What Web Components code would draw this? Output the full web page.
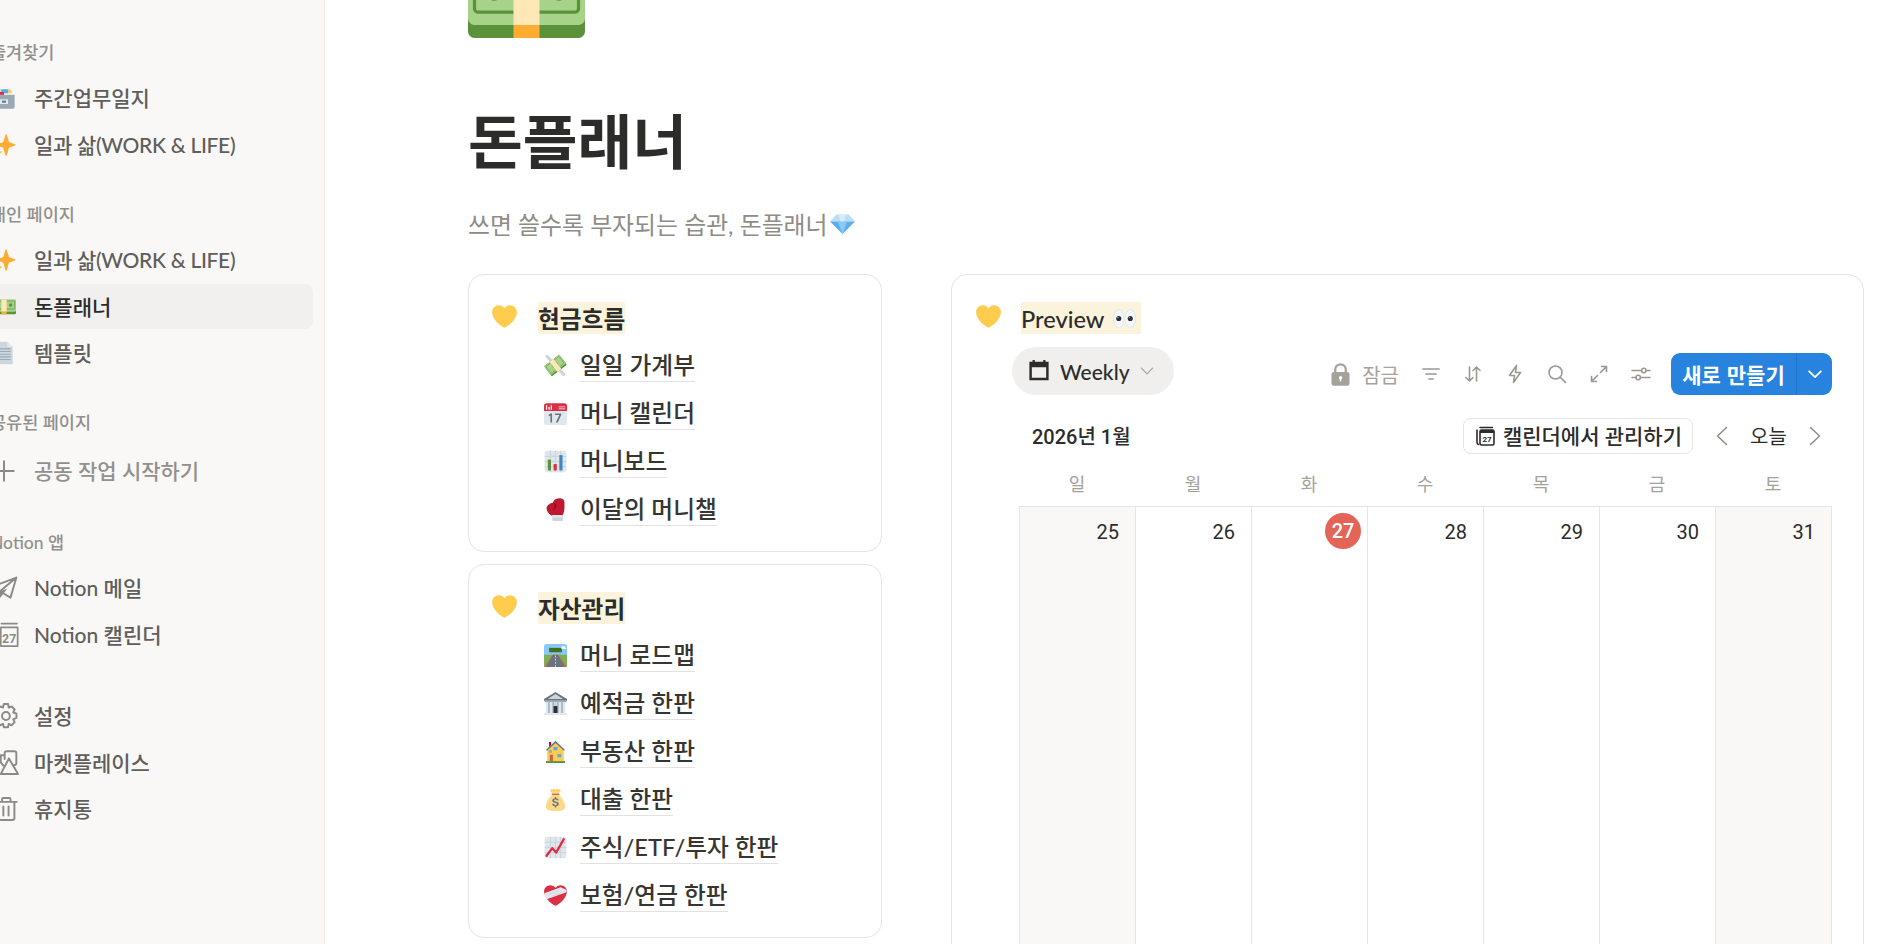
<!DOCTYPE html>
<html lang="ko">
<head>
<meta charset="utf-8">
<title>돈플래너</title>
<style>
  html, body { margin: 0; height: 100%; overflow: hidden; background: #fff; }
  body {
    display: flex;
    font-family: "Lato", "Noto Sans CJK KR", sans-serif;
    color: #2c2c2b;
  }
</style>
</head>
<body>
<side-bar>
  <side-section label="즐겨찾기">
    <side-item icon="box">주간업무일지</side-item>
    <side-item icon="sparkles" style="letter-spacing:-.32px">일과 삶(WORK &amp; LIFE)</side-item>
  </side-section>
  <side-section label="개인 페이지" style="--gap:22px">
    <side-item icon="sparkles" style="letter-spacing:-.32px">일과 삶(WORK &amp; LIFE)</side-item>
    <side-item icon="banknote" active>돈플래너</side-item>
    <side-item icon="page">템플릿</side-item>
  </side-section>
  <side-section label="공유된 페이지" style="--gap:21px">
    <side-item icon="plus" muted style="margin-top:2.8px">공동 작업 시작하기</side-item>
  </side-section>
  <side-section label="Notion 앱" style="--gap:24px">
    <side-item icon="plane">Notion 메일</side-item>
    <side-item icon="cal27">Notion 캘린더</side-item>
  </side-section>
  <side-section style="--gap:35px">
    <side-item icon="gear">설정</side-item>
    <side-item icon="market">마켓플레이스</side-item>
    <side-item icon="trash">휴지통</side-item>
  </side-section>
</side-bar>

<main-page>
  <link-card slot="left" heading="현금흐름">
    <link-row icon="moneywings">일일 가계부</link-row>
    <link-row icon="calendar">머니 캘린더</link-row>
    <link-row icon="barchart">머니보드</link-row>
    <link-row icon="glove">이달의 머니챌</link-row>
  </link-card>
  <link-card slot="left" heading="자산관리">
    <link-row icon="road">머니 로드맵</link-row>
    <link-row icon="bank">예적금 한판</link-row>
    <link-row icon="house">부동산 한판</link-row>
    <link-row icon="bag">대출 한판</link-row>
    <link-row icon="chart">주식/ETF/투자 한판</link-row>
    <link-row icon="mend">보험/연금 한판</link-row>
  </link-card>
  <calendar-card slot="right"></calendar-card>
</main-page>

<script>
const HEART = 'M35.885 11.833c0-5.45-4.418-9.868-9.867-9.868-3.308 0-6.227 1.633-8.018 4.129-1.791-2.496-4.71-4.129-8.017-4.129-5.45 0-9.868 4.417-9.868 9.868 0 .772.098 1.52.266 2.241C1.751 22.587 11.216 31.568 18 34.034c6.783-2.466 16.249-11.447 17.617-19.959.17-.721.268-1.469.268-2.242z';

// twemoji style pictures, viewBox 0 0 36 36
const EMOJI = {
  heart: `<path fill="#ffcc4d" d="${HEART}"/>`,
  sparkles: `<path fill="#ffac33" d="M34.347 16.893l-8.899-3.294-3.323-10.891c-.128-.42-.517-.708-.956-.708-.439 0-.828.288-.956.708l-3.322 10.891-8.9 3.294c-.393.146-.653.519-.653.938 0 .418.26.793.653.938l8.895 3.293 3.324 11.223c.126.424.516.715.959.715.442 0 .833-.291.959-.716l3.324-11.223 8.896-3.293c.391-.144.652-.518.652-.937 0-.418-.261-.792-.653-.938z"/><path fill="#ffcc4d" d="M14.347 27.894l-2.314-.856-.9-3.3c-.118-.436-.513-.738-.964-.738-.451 0-.846.302-.965.737l-.9 3.3-2.313.856c-.393.145-.653.52-.653.938 0 .418.26.793.653.938l2.301.853.907 3.622c.112.444.511.756.97.756.459 0 .858-.312.97-.757l.907-3.622 2.301-.853c.393-.144.653-.519.653-.937 0-.418-.26-.793-.653-.937zM10.009 6.231l-2.364-.875-.876-2.365c-.145-.393-.519-.653-.938-.653-.418 0-.792.26-.938.653l-.875 2.365-2.365.875c-.393.146-.653.52-.653.938 0 .418.26.793.653.938l2.365.875.875 2.365c.146.393.52.653.938.653.418 0 .792-.26.938-.653l.875-2.365 2.365-.875c.393-.146.653-.52.653-.938 0-.418-.26-.792-.653-.938z"/>`,
  banknote: `<rect y="7" width="36" height="22" rx="2" fill="#5c913b"/><path fill="#a6d388" d="M0 9a2 2 0 012-2h32a2 2 0 012 2v14a2 2 0 01-2 2H2a2 2 0 01-2-2z"/><rect x="2" y="9" width="32" height="12" rx="1" fill="none" stroke="#5c913b"/><circle cx="8" cy="15" r="2.5" fill="#5c913b"/><circle cx="28" cy="15" r="2.5" fill="#5c913b"/><rect x="14" y="7" width="8" height="18" fill="#ffe8b6"/><rect x="14" y="25" width="8" height="4" fill="#ffac33"/>`,
  box: `<path fill="#ccd6dd" d="M5 10l3-5h20l3 5z"/><path fill="#55acee" d="M14 5h10v6H14z"/><path fill="#dd2e44" d="M5 9h13v6H5z"/><path fill="#ffcc4d" d="M24 6h4v5h-4z"/><path fill="#99aab5" d="M2 13h32v18a3 3 0 01-3 3H5a3 3 0 01-3-3z"/><path fill="#e1e8ed" d="M12 20h12v7H12z"/><path fill="#66757f" d="M15 22h6v3h-6z"/>`,
  page: `<path fill="#ccd6dd" d="M6 1h17l8 8v26H6z"/><path fill="#e1e8ed" d="M23 1l8 8h-8z"/><path fill="#99aab5" d="M9 11h19v1.600H9zM9 15h19v1.600H9zM9 19h19v1.600H9zM9 23h19v1.600H9zM9 27h19v1.600H9z"/>`,
  moneywings: `<path d="M3 2.500c2-1.500 4-.5 5 1l5 6-3.500 3-6-6.500c-1.200-1.300-1.500-2.700-.5-3.500zM33 33.500c-2 1.500-4 .5-5-1l-5-6 3.500-3 6 6.500c1.200 1.300 1.500 2.700.5 3.500z" fill="#ccd6dd"/><g transform="rotate(-38 18 18)"><rect x="3" y="8" width="30" height="20" rx="1.500" fill="#5c913b"/><rect x="3" y="8" width="30" height="17.500" rx="1.500" fill="#a6d388"/><rect x="5" y="10" width="26" height="13.500" fill="none" stroke="#5c913b" stroke-width=".8"/><circle cx="18" cy="17" r="5" fill="#77b255"/><rect x="14" y="8" width="8" height="20" fill="#ffe8b6"/></g>`,
  calendar: `<path fill="#e1e8ed" d="M36 32a4 4 0 01-4 4H4a4 4 0 01-4-4V9a4 4 0 014-4h28a4 4 0 014 4z"/><path fill="#dd2e44" d="M36 14H0V6a4 4 0 014-4h28a4 4 0 014 4z"/><path fill="#fff" d="M3 5h2v7H3zM7 8h2v4H7zM10.500 5h2v7h-2zM23 7h10v1.400H23zM23 10h10v1.400H23z"/><path fill="#66757f" d="M10 18h2.600v14H10L10 21l-2.500 1.400v-2.400zM17 18h10v2.400L21.500 32h-3l5.500-11.500h-7z"/>`,
  barchart: `<path fill="#e1e8ed" d="M31 1H5a4 4 0 00-4 4v26a4 4 0 004 4h26a4 4 0 004-4V5a4 4 0 00-4-4z"/><path fill="#ccd6dd" d="M9 1h2v34H9zM17 1h2v34h-2zM25 1h2v34h-2zM1 9h34v2H1zM1 17h34v2H1zM1 25h34v2H1z"/><path fill="#5c913b" d="M6 15h5v17H6z"/><path fill="#dd2e44" d="M15 22h5v10h-5z"/><path fill="#3b88c3" d="M24 8h5v24h-5z"/>`,
  glove: `<path fill="#be1931" d="M28 1c-5-1.200-11 .2-13 3.500-.8 1.300-1 3-1 3-4 .5-10 4-10 8.500 0 3 2 6.500 4 8.500 2 2 4 3 5 3h16c1-2 3-6 3-13S33 2 28 1z"/><path fill="#a0041e" d="M14 7.500c2.500 1 3.500 5 1.500 9-1 2-3.500 2.500-3.500 2.500 3.500 0 6-2 7-5.500 1-4-1.500-6.500-5-6z"/><path fill="#ccd6dd" d="M13 27h17v7a2 2 0 01-2 2H15a2 2 0 01-2-2z"/><path fill="#e1e8ed" d="M13 27h17v3.500H13z"/>`,
  road: `<rect width="36" height="36" rx="4" fill="#88c9f9"/><path fill="#77b255" d="M0 17h36v15a4 4 0 01-4 4H4a4 4 0 01-4-4z"/><path fill="#c1694f" d="M13.500 17h9L36 36H0z"/><path fill="#66757f" d="M14.500 17h7L32 36H4z"/><path stroke="#fff" stroke-width="1" stroke-dasharray="3 2" d="M18 18v18"/><path fill="#3e721d" d="M8 6h20v7H8z"/><path fill="#99aab5" d="M11 13h1.500v4H11zM24 13h1.500v4H24z"/><path fill="#fff" d="M27 6a3 3 0 013-3 3 3 0 013 2 2.300 2.300 0 012 2.500H27z"/>`,
  bank: `<path fill="#66757f" d="M18 0L0 11v2.500h36V11z"/><path fill="#ccd6dd" d="M18 3L6 11h24z"/><path fill="#99aab5" d="M1 13h34v3H1z"/><path fill="#ccd6dd" d="M3 16h30v17H3z"/><path fill="#e1e8ed" d="M3 16h4v17H3zM9.500 16h4v17h-4zM22.500 16h4v17h-4zM29 16h4v17h-4z"/><path fill="#8899a6" d="M7 16h1.500v17H7zM13.500 16h1.500v17h-1.500zM21 16h1.500v17H21zM27.500 16H29v17h-1.500z"/><path fill="#292f33" d="M15 22h6v11h-6z"/><path fill="#e1e8ed" d="M0 33h36v3H0z"/>`,
  house: `<path fill="#ffcc4d" d="M5 16L18 4l13 12v17H5z"/><path fill="#66757f" d="M18 1L3 15.500l1.800 1.500L18 4.500 31.200 17 33 15.500z"/><path fill="#c1694f" d="M9 23h5v10H9z"/><path fill="#55acee" d="M21 22h6v5h-6zM15 11h6v5h-6zM8 16h4v4H8z"/><path fill="#a0041e" d="M8 3h3v5l-3 3z"/><path fill="#5c913b" d="M3 33h30v3H3z"/>`,
  bag: `<path fill="#fdd888" d="M33 29c0-8-7-16-10-18l2-5H11l2 5C10 13 3 21 3 29c0 5 4 7 15 7s15-2 15-7z"/><path fill="#ffcc4d" d="M11 1l2 2 2-2 3 2 3-2 2 2 2-2 1 5H10z"/><path fill="#bf6952" d="M12 9h12v2H12z"/><path fill="#67757f" d="M17 14h2v2c2 .2 3.500 1.200 4 3l-2.200.7c-.3-1-1.300-1.700-2.800-1.700-1.400 0-2.300.6-2.300 1.500 0 2.500 7.500 1 7.500 5.500 0 2-1.700 3.200-4.200 3.500v2h-2v-2c-2.300-.3-4-1.500-4.500-3.500l2.300-.6c.4 1.300 1.600 2.100 3.200 2.100 1.500 0 2.500-.6 2.500-1.500 0-2.500-7.500-1-7.500-5.500 0-1.800 1.600-3 4-3.300z"/>`,
  chart: `<path fill="#e1e8ed" d="M31 1H5a4 4 0 00-4 4v26a4 4 0 004 4h26a4 4 0 004-4V5a4 4 0 00-4-4z"/><path fill="#ccd6dd" d="M9 1h2v34H9zM17 1h2v34h-2zM25 1h2v34h-2zM1 9h34v2H1zM1 17h34v2H1zM1 25h34v2H1z"/><path fill="none" stroke="#dd2e44" stroke-width="3.600" stroke-linecap="round" stroke-linejoin="round" d="M4 31l9-12 6 7L31 5"/>`,
  mend: `<path fill="#dd2e44" d="${HEART}"/><path fill="#e1e8ed" d="M.5 14.500L26 5l9 4 .5 4L4 24c-2-3-3.200-6-3.500-9.500z"/><path fill="#ccd6dd" d="M8 15l14-5 1 1.200-14 5zM13 18l14-5 .8 1.200-14 5z"/>`,
  eyes: `<ellipse cx="9" cy="18" rx="9" ry="15" fill="#e1e8ed"/><ellipse cx="27" cy="18" rx="9" ry="15" fill="#e1e8ed"/><ellipse cx="9" cy="18" rx="7.500" ry="13.500" fill="#f5f8fa"/><ellipse cx="27" cy="18" rx="7.500" ry="13.500" fill="#f5f8fa"/><circle cx="9" cy="18" r="4" fill="#292f33"/><circle cx="27" cy="18" r="4" fill="#292f33"/><circle cx="7.600" cy="16.500" r="1.200" fill="#8899a6"/><circle cx="25.600" cy="16.500" r="1.200" fill="#8899a6"/>`,
  diamond: `<path fill="#bdddf4" d="M9 5h18l9 10H0z"/><path fill="#5dadec" d="M0 15h36L18 33z"/><path fill="#88c9f9" d="M11 15h14l-7 18z"/><path fill="#e1f0fb" d="M12 5h12l-4 10h-5z" opacity=".7"/>`
};

// line icons, viewBox 0 0 20 20
const stroke = (d, w) => `<path fill="none" stroke="currentColor" stroke-width="${w || 1.500}" stroke-linecap="round" stroke-linejoin="round" d="${d}"/>`;
const ICONS = {
  plus: stroke('M10 2.500v15M2.500 10h15', 1.500),
  plane: stroke('M19.500 2L1 9l6 3.500L19.500 2l-4.500 15.500-8-5-1 5.500L2 15') + `<path fill="currentColor" d="M7 12.500l5.500-2-5.800 7.500z"/>`,
  cal27: stroke('M8 1.200h12M7.500 4.200h13v14.300h-13', 1.300) + `<path fill="none" stroke="currentColor" stroke-width="1.300" d="M7.500 4.200v14.300"/><text x="14" y="16" text-anchor="middle" font-size="9.500" font-weight="700" fill="currentColor" font-family="Roboto, sans-serif">27</text>`,
  gear: `<g transform="translate(11.500 10) scale(1.080) translate(-10 -10)">` + stroke('M8.500 1.500h3l.5 2.500 2-.8 2.200 2.200-1 2 2.300 1v3l-2.300 1 1 2-2.200 2.200-2-1-.5 2.400h-3l-.6-2.400-2 1-2.100-2.200 1-2-2.300-1v-3l2.300-1-1-2L5.900 3.200l2 .8z', 1.400) + `<circle cx="10" cy="10" r="2.800" fill="none" stroke="currentColor" stroke-width="1.400"/></g>`,
  market: stroke('M10.500 7V2.500A1.500 1.500 0 0112 1h6a1.500 1.500 0 011.500 1.500V10a1.500 1.500 0 01-1.500 1.500M13.800 6.500L7.500 18.500h13.300zM10.500 4H7.500V9.500L9.500 12'),
  trash: stroke('M3.500 4.500h16.300M8.500 4.500V2.500a1 1 0 011-1h4.500a1 1 0 011 1v2M5 4.500v12.500a1.500 1.500 0 001.500 1.500h10a1.500 1.500 0 001.500-1.500V4.500M9.500 8v7M13.500 8v7'),
  filter: stroke('M2 5h16M5 10h10M8 15h4', 1.700),
  sort: stroke('M6.500 3v14M3 13.500L6.500 17l3.500-3.500M13.500 17V3M10 6.500L13.500 3 17 6.500', 1.600),
  bolt: stroke('M11.500 1.500L4.500 11.500h5L8.500 18.500 15.500 8.500h-5z', 1.600),
  search: stroke('M13.500 13.500L18.500 18.500', 1.700) + `<circle cx="8.500" cy="8.500" r="6.500" fill="none" stroke="currentColor" stroke-width="1.600"/>`,
  expand: stroke('M11.500 8.500L17.500 2.500M12.500 2.500h5v5M8.500 11.500l-6 6M2.500 12.500v5h5', 1.600),
  sliders: stroke('M1 6.500h9.500M15 6.500h4M1 13.500h4M9.500 13.500H19') + `<circle cx="12.800" cy="6.500" r="2.200" fill="none" stroke="currentColor" stroke-width="1.500"/><circle cx="7.200" cy="13.500" r="2.200" fill="none" stroke="currentColor" stroke-width="1.500"/>`,
  lock: `<path fill="none" stroke="currentColor" stroke-width="1.800" d="M5.800 9V6a4.200 4.200 0 018.400 0v3"/><rect x="2.800" y="8" width="14.400" height="11" rx="1.800" fill="currentColor"/><circle cx="10" cy="12.500" r="1.400" fill="#fff"/><path fill="#fff" d="M9.400 12.500h1.200v3H9.400z"/>`,
  week: `<path fill="currentColor" d="M5 0h2.400v3H5zM16.600 0H19v3h-2.400z"/><path fill="currentColor" fill-rule="evenodd" d="M1.500 2h21v20h-21zM4.200 8v11.400h15.600V8z"/>`,
  chevdown: stroke('M3 6.500l7 7 7-7', 1.500),
  chevwhite: stroke('M3.500 7l6.500 6.500L16.500 7', 2),
  chevleft: stroke('M14.500 1.500L5.500 10l9 8.500', 1.500),
  chevright: stroke('M5.500 1.500l9 8.500-9 8.500', 1.500),
  stack: stroke('M5 1.500h12.500M2 4v12.500a2 2 0 001.500 2', 1.600) + `<rect x="5" y="4" width="14" height="15" rx="1.500" fill="none" stroke="currentColor" stroke-width="1.600"/><path fill="currentColor" d="M5 4h14v3H5z"/><text x="12" y="16.200" text-anchor="middle" font-size="8" font-weight="700" fill="currentColor" font-family="Roboto, sans-serif">27</text>`
};

class TwEmoji extends HTMLElement {
  connectedCallback() {
    const size = this.getAttribute('size') || 24;
    this.attachShadow({mode: 'open'}).innerHTML = `
      <style>
        :host { display: inline-flex; flex: none; width: ${size}px; height: ${size}px; }
        svg { width: 100%; height: 100%; display: block; }
      </style>
      <svg viewBox="0 0 36 36">${EMOJI[this.getAttribute('name')] || ''}</svg>`;
  }
}
class UiIcon extends HTMLElement {
  connectedCallback() {
    const size = this.getAttribute('size') || 20;
    const box = this.getAttribute('box') || '0 0 20 20';
    this.attachShadow({mode: 'open'}).innerHTML = `
      <style>
        :host { display: inline-flex; flex: none; width: ${size}px; height: ${size}px; }
        svg { width: 100%; height: 100%; display: block; overflow: visible; }
      </style>
      <svg viewBox="${box}">${ICONS[this.getAttribute('name')] || ''}</svg>`;
  }
}
customElements.define('tw-emoji', TwEmoji);
customElements.define('ui-icon', UiIcon);

class SideBar extends HTMLElement {
  constructor() {
    super();
    this.attachShadow({mode: 'open'}).innerHTML = `
      <style>
        :host {
          display: block; flex: none; box-sizing: border-box;
          width: 325px; height: 944px; overflow: hidden;
          background: #f9f8f7; border-right: 1px solid #eeedeb;
        }
        .inner { margin-left: -10px; padding: 29px 11px 0 0; }
      </style>
      <div class="inner"><slot></slot></div>`;
  }
}
class SideSection extends HTMLElement {
  connectedCallback() {
    const label = this.getAttribute('label');
    this.attachShadow({mode: 'open'}).innerHTML = `
      <style>
        :host { display: flow-root; margin-top: var(--gap, 0); }
        .label {
          height: 46.67px; line-height: 47.5px; font-size: 17.5px; font-weight: 500;
          color: #91908c; white-space: nowrap;
        }
      </style>
      ${label ? `<div class="label">${label}</div>` : ''}
      <slot></slot>`;
  }
}
class SideItem extends HTMLElement {
  connectedCallback() {
    const icon = this.getAttribute('icon');
    const graphic = EMOJI[icon]
      ? `<tw-emoji name="${icon}" size="24"></tw-emoji>`
      : `<ui-icon name="${icon}" size="26" style="color:#8c8a85;margin:0 -1px"></ui-icon>`;
    this.attachShadow({mode: 'open'}).innerHTML = `
      <style>
        :host {
          display: flex; align-items: center; gap: 18px; box-sizing: border-box;
          height: 45px; margin-bottom: 1.67px; padding-left: 2px; border-radius: 8px;
          font-size: 21px; font-weight: 500; color: #5f5e5b; white-space: nowrap;
        }
        :host([active]) { background: #f1f0ee; color: #2c2c2b; }
        :host([muted]) { color: #91908c; }
        span { margin-bottom: 2px; }
      </style>
      ${graphic}<span><slot></slot></span>`;
  }
}
customElements.define('side-bar', SideBar);
customElements.define('side-section', SideSection);
customElements.define('side-item', SideItem);

class MainPage extends HTMLElement {
  constructor() {
    super();
    this.attachShadow({mode: 'open'}).innerHTML = `
      <style>
        :host { display: block; flex: 1; min-width: 0; height: 944px; overflow: hidden; background: #fff; }
        .wrap { padding-left: 143px; }
        .cover { display: block; width: 117px; height: 38px; }
        h1 { margin: 68px 0 0; font-size: 59.5px; line-height: 70px; font-weight: 700; color: #2c2c2b; }
        .sub {
          margin-top: 32px; height: 30px; display: flex; align-items: center;
          font-size: 23.9px; color: #8f8c86;
        }
        .sub tw-emoji { margin-left: 2px; }
        .cols { display: flex; align-items: flex-start; gap: 69px; margin-top: 36px; }
        .left { width: 414px; flex: none; display: flex; flex-direction: column; gap: 12px; }
      </style>
      <div class="wrap">
        <svg class="cover" viewBox="0 17.300 36 11.700" preserveAspectRatio="none">${EMOJI.banknote}</svg>
        <h1>돈플래너</h1>
        <div class="sub">쓰면 쓸수록 부자되는 습관, 돈플래너<tw-emoji name="diamond" size="25"></tw-emoji></div>
        <div class="cols">
          <div class="left"><slot name="left"></slot></div>
          <slot name="right"></slot>
        </div>
      </div>`;
  }
}
class LinkCard extends HTMLElement {
  connectedCallback() {
    this.attachShadow({mode: 'open'}).innerHTML = `
      <style>
        :host {
          display: block; box-sizing: border-box; position: relative;
          border: 1px solid #e6e5e3; border-radius: 16px; padding: 27px 0 15px 69px;
        }
        .heart { position: absolute; left: 23px; top: 29px; }
        h3 {
          margin: 0 0 10px; display: inline-block; height: 32px; line-height: 35px;
          font-size: 23.7px; font-weight: 700; background: #fbf3db; color: #2c2c2b;
        }
      </style>
      <tw-emoji class="heart" name="heart" size="25"></tw-emoji>
      <div><h3>${this.getAttribute('heading')}</h3></div>
      <div><slot></slot></div>`;
  }
}
class LinkRow extends HTMLElement {
  connectedCallback() {
    this.attachShadow({mode: 'open'}).innerHTML = `
      <style>
        :host {
          display: flex; align-items: flex-start; gap: 13px; box-sizing: border-box;
          height: 48px; padding: 7px 0 0 6px;
        }
        tw-emoji { margin-top: 3px; }
        span {
          height: 30px; line-height: 29px; font-size: 23.7px; font-weight: 500; color: #37352f;
          border-bottom: 1px solid #e3e2e0; white-space: nowrap;
        }
      </style>
      <tw-emoji name="${this.getAttribute('icon')}" size="23"></tw-emoji>
      <span><slot></slot></span>`;
  }
}
customElements.define('main-page', MainPage);
customElements.define('link-card', LinkCard);
customElements.define('link-row', LinkRow);

class CalendarCard extends HTMLElement {
  connectedCallback() {
    const days = ['일', '월', '화', '수', '목', '금', '토'];
    const nums = [25, 26, 27, 28, 29, 30, 31];
    this.attachShadow({mode: 'open'}).innerHTML = `
      <style>
        :host {
          display: block; box-sizing: border-box; position: relative;
          width: 913px; height: 800px; flex: none;
          border: 1px solid #e6e5e3; border-radius: 16px; padding: 27px 31px 0 67px;
          font-family: "Roboto", "Noto Sans CJK KR", sans-serif;
        }
        .heart { position: absolute; left: 24px; top: 29px; }
        .title {
          display: inline-flex; align-items: center; box-sizing: border-box; width: 120px;
          height: 32px; margin-left: 2px; padding: 2px 0 0 0;
          background: #fbf3db; font-family: "Lato", sans-serif; font-size: 23.6px; font-weight: 500;
        }
        .title tw-emoji { margin: -2px 0 0 9px; }
        .bar { display: flex; align-items: flex-end; justify-content: space-between; margin: 13px 0 0 -7px; }
        .pill {
          display: flex; align-items: center; box-sizing: border-box; width: 162px; height: 48px;
          padding-left: 16px; border-radius: 24px; background: #f0efed;
          font-family: "Lato", sans-serif; font-size: 21px; font-weight: 500;
        }
        .pill .t { margin-left: 10px; }
        .pill .c { margin-left: 9px; color: #a5a29c; }
        .tools { display: flex; align-items: center; height: 42px; color: #9b9892; }
        .tools > ui-icon { margin-left: 22px; }
        .lock { display: flex; align-items: center; font-size: 20px; color: #a5a29c; }
        .lock ui-icon { margin: 0 9px 0 -3px; }
        .new {
          display: flex; align-items: center; box-sizing: border-box; width: 161px; height: 42px; margin-left: 20px;
          background: #2783de; color: #fff; border-radius: 9px; font-size: 21px; font-weight: 700;
          font-family: "Noto Sans CJK KR", sans-serif;
        }
        .new .a { flex: 1; height: 100%; display: flex; align-items: center; justify-content: center; }
        .new .b {
          width: 35px; height: 100%; display: flex; align-items: center; justify-content: center;
          border-left: 1px solid #1f74c9;
        }
        .nav { display: flex; align-items: center; height: 36px; margin-top: 23px; padding-left: 13px; font-size: 20px; }
        .month { font-weight: 500; flex: 1; margin-bottom: 2px; }
        .manage {
          display: flex; align-items: center; gap: 8px; box-sizing: border-box; height: 36px; padding: 0 10px 2px 11px;
          border: 1px solid #e6e5e3; border-radius: 8px; font-size: 21px; font-weight: 500; color: #2c2c2b;
        }
        .manage ui-icon { margin-top: 2px; }
        .today { width: 37px; margin: 0 18px 2px; font-size: 20px; white-space: nowrap; }
        .arrow { color: #8f8c86; }
        .head { display: grid; grid-template-columns: repeat(7, 1fr); height: 52px; padding-top: 5px; box-sizing: border-box; width: 812px; }
        .head div { display: flex; align-items: center; justify-content: center; font-size: 18px; color: #a5a29c; }
        .grid {
          display: grid; grid-template-columns: repeat(7, 1fr); width: 813px; box-sizing: border-box;
          border-top: 1px solid #e6e5e3; border-right: 1px solid #e6e5e3; height: 600px;
        }
        .cell { border-left: 1px solid #e6e5e3; display: flex; justify-content: flex-end; align-items: flex-start; padding: 6px 6px 0 0; }
        .cell.off { background: #f9f8f7; }
        .num { height: 36px; line-height: 39px; min-width: 36px; padding: 0 10px; box-sizing: border-box; font-size: 20px; text-align: right; color: #2c2c2b; }
        .cell.now .num { padding: 0; line-height: 37px; text-align: center; background: #e56458; color: #fff; border-radius: 50%; font-weight: 500; }
      </style>
      <tw-emoji class="heart" name="heart" size="25"></tw-emoji>
      <div class="title">Preview<tw-emoji name="eyes" size="23"></tw-emoji></div>
      <div class="bar">
        <div class="pill"><ui-icon name="week" size="22" box="0 0 24 24"></ui-icon><span class="t">Weekly</span><ui-icon class="c" name="chevdown" size="16"></ui-icon></div>
        <div class="tools">
          <div class="lock"><ui-icon name="lock" size="25"></ui-icon>잠금</div>
          <ui-icon name="filter"></ui-icon><ui-icon name="sort"></ui-icon><ui-icon name="bolt"></ui-icon>
          <ui-icon name="search"></ui-icon><ui-icon name="expand"></ui-icon><ui-icon name="sliders"></ui-icon>
          <div class="new"><span class="a">새로 만들기</span><span class="b"><ui-icon name="chevwhite" size="18"></ui-icon></span></div>
        </div>
      </div>
      <div class="nav">
        <span class="month">2026년 1월</span>
        <span class="manage"><ui-icon name="stack" size="20"></ui-icon>캘린더에서 관리하기</span>
        <ui-icon class="arrow" name="chevleft" size="20" style="margin-left:19px"></ui-icon>
        <span class="today">오늘</span>
        <ui-icon class="arrow" name="chevright" size="20" style="margin-right:7px"></ui-icon>
      </div>
      <div class="head">${days.map(d => `<div>${d}</div>`).join('')}</div>
      <div class="grid">
        ${nums.map((n, i) => `<div class="cell ${i === 0 || i === 6 ? 'off' : ''} ${n === 27 ? 'now' : ''}"><span class="num">${n}</span></div>`).join('')}
      </div>`;
  }
}
customElements.define('calendar-card', CalendarCard);
</script>
</body>
</html>
